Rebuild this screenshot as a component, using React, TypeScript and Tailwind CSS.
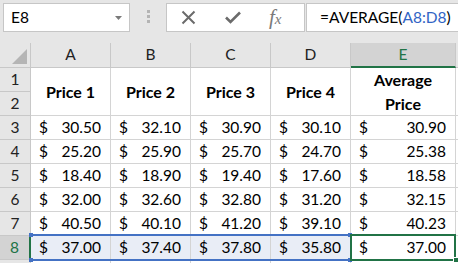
import React from "react";

const rows: [number, string[], string][] = [
  [3, ["30.50", "32.10", "30.90", "30.10"], "30.90"],
  [4, ["25.20", "25.90", "25.70", "24.70"], "25.38"],
  [5, ["18.40", "18.90", "19.40", "17.60"], "18.58"],
  [6, ["32.00", "32.60", "32.80", "31.20"], "32.15"],
  [7, ["40.50", "40.10", "41.20", "39.10"], "40.23"],
  [8, ["37.00", "37.40", "37.80", "35.80"], "37.00"],
];

function Money({ v, sel }: { v: string; sel?: boolean }) {
  return (
    <div
      className={`flex items-center justify-between pl-[8px] pr-[9px] border-r border-b border-[#d4d4d4] text-[15.5px] text-black ${
        sel ? "bg-[#e9edf6]" : "bg-white"
      }`}
    >
      <span>$</span>
      <span>{v}</span>
    </div>
  );
}

export default function App() {
  const hdr = "flex items-center justify-center border-r border-b border-[#c8c8c8] bg-[#e6e6e6] text-[15.5px] text-[#222]";
  return (
    <div className="relative w-[458px] h-[263px] overflow-hidden bg-[#e6e6e6] font-['Lato',sans-serif]">
      {/* Top formula bar */}
      <div className="flex items-start h-[43px] pt-[3px] pl-[3px]">
        <div className="relative flex items-center w-[127px] h-[29px] border border-[#c6c6c6] bg-white pl-[7px] text-[15.5px] text-black">
          E8
          <svg className="absolute left-[111px] top-[12px]" width="7" height="4" viewBox="0 0 7 4">
            <path d="M0 0H7L3.5 4Z" fill="#7a7a7a" />
          </svg>
        </div>
        <div className="flex flex-col gap-[2px] pt-[7px] ml-[17px] w-[3px]">
          <div className="w-[3px] h-[3px] bg-[#b4b4b4]" />
          <div className="w-[3px] h-[3px] bg-[#b4b4b4]" />
          <div className="w-[3px] h-[3px] bg-[#b4b4b4]" />
        </div>
        <div className="flex items-center ml-[16px] w-[139px] h-[29px] border border-[#c6c6c6] bg-white">
          <svg className="ml-[14px]" width="15" height="15" viewBox="0 0 15 15">
            <path d="M1.5 1.5L13.5 13.5M13.5 1.5L1.5 13.5" stroke="#6b6b6b" strokeWidth="2" />
          </svg>
          <svg className="ml-[29px]" width="16" height="13" viewBox="0 0 16 13">
            <path d="M1 6.5L5.5 11L15 1.5" stroke="#6b6b6b" strokeWidth="2.6" fill="none" />
          </svg>
          <span className="ml-[28px] font-['Liberation_Serif',serif] italic text-[#7a7a7a] text-[21px] leading-none">
            f<span className="text-[15px]">x</span>
          </span>
        </div>
        <div className="flex items-center ml-[1px] flex-1 h-[29px] border-y border-l border-[#c6c6c6] bg-white pl-[13px] text-[15.5px] text-black whitespace-nowrap">
          =AVERAGE(<span className="text-[#3265c5]">A8:D8</span>)
        </div>
      </div>

      {/* Sheet grid */}
      <div className="grid grid-cols-[31px_80px_80px_80px_80px_105px_1fr] grid-rows-[25px_repeat(9,24px)]">
        <div className="relative border-r border-b border-[#c8c8c8] bg-[#e6e6e6]">
          <svg className="absolute left-[12px] top-[6px]" width="15" height="15" viewBox="0 0 15 15">
            <path d="M15 0V15H0Z" fill="#b5b5b5" />
          </svg>
        </div>
        <div className={hdr}>A</div>
        <div className={hdr}>B</div>
        <div className={hdr}>C</div>
        <div className={hdr}>D</div>
        <div className="flex items-center justify-center border-r border-r-[#c8c8c8] border-b-2 border-b-[#217346] bg-[#d3d3d3] text-[15.5px] text-[#217346]">
          E
        </div>
        <div className="border-b border-[#c8c8c8] bg-[#e6e6e6]" />

        <div className={hdr + " col-start-1 row-start-2"}>1</div>
        <div className={hdr + " col-start-1 row-start-3"}>2</div>
        {["Price 1", "Price 2", "Price 3", "Price 4"].map((t, i) => (
          <div
            key={t}
            className="row-span-2 row-start-2 flex items-center justify-center border-r border-b border-[#d4d4d4] bg-white font-bold text-[16px] text-black"
            style={{ gridColumnStart: i + 2 }}
          >
            {t}
          </div>
        ))}
        <div className="row-span-2 row-start-2 col-start-6 flex flex-col items-center justify-center border-r border-b border-[#d4d4d4] bg-white font-bold text-[16px] text-black leading-[24px]">
          <span>Average</span>
          <span>Price</span>
        </div>
        <div className="row-span-2 row-start-2 col-start-7 border-b border-[#d4d4d4] bg-white" />

        {rows.map(([n, vals, avg]) => {
          const sel = n === 8;
          return (
            <React.Fragment key={n}>
              <div
                className={
                  sel
                    ? "flex items-center justify-center border-r-2 border-r-[#217346] border-b border-b-[#c8c8c8] bg-[#d3d3d3] text-[15.5px] text-[#217346]"
                    : hdr
                }
              >
                {n}
              </div>
              {vals.map((v, i) => (
                <Money key={i} v={v} sel={sel} />
              ))}
              <Money v={avg} />
              <div className="border-b border-[#d4d4d4] bg-white" />
            </React.Fragment>
          );
        })}
        {/* row 9 partial (clipped) */}
        <div className="border-r border-[#c8c8c8] bg-[#e6e6e6]" />
        <div className="border-r border-[#d4d4d4] bg-white" />
        <div className="border-r border-[#d4d4d4] bg-white" />
        <div className="border-r border-[#d4d4d4] bg-white" />
        <div className="border-r border-[#d4d4d4] bg-white" />
        <div className="border-r border-[#d4d4d4] bg-white" />
        <div className="bg-white" />
      </div>

      {/* Blue range highlight A8:D8 */}
      <div className="absolute left-[31px] top-[234px] w-[319px] h-[2px] bg-[#4472c4]" />
      <div className="absolute left-[31px] top-[259px] w-[319px] h-[2px] bg-[#4472c4]" />
      <div className="absolute left-[29px] top-[233px] w-[4px] h-[4px] bg-[#4472c4]" />
      <div className="absolute left-[29px] top-[258px] w-[4px] h-[4px] bg-[#4472c4]" />
      <div className="absolute left-[348px] top-[233px] w-[4px] h-[4px] bg-[#4472c4]" />
      <div className="absolute left-[348px] top-[258px] w-[4px] h-[4px] bg-[#4472c4]" />

      {/* Active cell E8 */}
      <div className="absolute left-[350px] top-[234px] w-[106px] h-[27px] border-2 border-[#217346]" />
      <div className="absolute left-[453px] top-[257px] w-[6px] h-[6px] bg-[#217346] border border-white" />
    </div>
  );
}
